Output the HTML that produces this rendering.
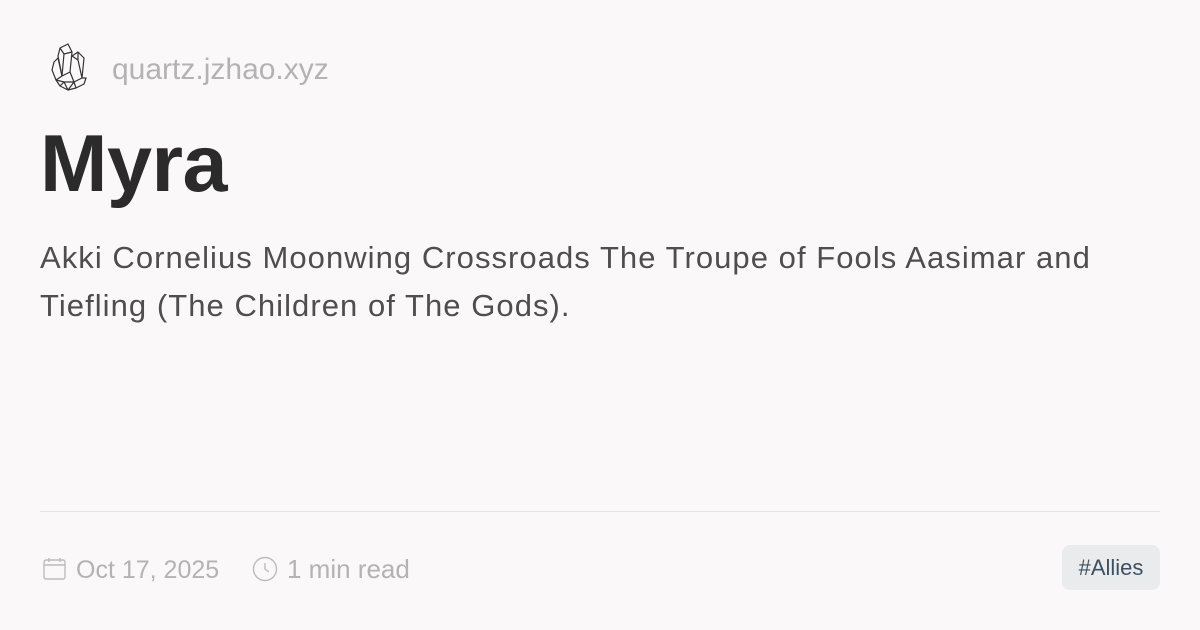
<!DOCTYPE html>
<html><head><meta charset="utf-8"><style>
html,body{margin:0;padding:0}
body{width:1200px;height:630px;background:#faf8f8;position:relative;overflow:hidden;font-family:"Liberation Sans",sans-serif}
.site{position:absolute;left:112px;top:52px;font-size:30px;color:#b4b2b2;line-height:36px}
.title{position:absolute;left:40px;top:118px;font-size:81px;font-weight:bold;color:#2b2b2b;line-height:92px;letter-spacing:-0.5px}
.desc{position:absolute;left:40px;top:234px;font-size:31px;color:#4e4e4e;line-height:48px;white-space:nowrap;letter-spacing:1.05px}
.hr{position:absolute;left:40px;right:40px;top:511px;height:1px;background:#e6e4e4}
.meta{position:absolute;top:553px;font-size:26px;color:#b4b2b2;line-height:32px}
.tag{position:absolute;left:1062px;top:545px;width:98px;height:45px;background:#eaebed;border-radius:8px;color:#3f5060;font-size:22px;line-height:45px;text-align:center}
</style></head><body>
<svg style="position:absolute;left:48px;top:42px" width="40" height="52" viewBox="0 0 40 52" fill="none" stroke="#333" stroke-width="1.2" stroke-linejoin="round">
<path d="M12 6 L20 2 L24 10 L22 30 L14 34 L10 14 Z"/>
<path d="M12 6 L16 12 L14 34 M16 12 L24 10"/>
<path d="M24 14 L30 10 L36 16 L34 36 L26 40 L22 30"/>
<path d="M30 10 L30 18 L34 36 M24 14 L30 18"/>
<path d="M6 20 L10 16 L14 34 L8 38 L4 28 Z"/>
<path d="M8 38 L12 44 L20 48 L28 46 L36 42 L38 36 L34 36 M8 38 L16 40 L26 40 M12 44 L16 40 L20 48 L26 40 L28 46"/>
</svg>
<div class="site">quartz.jzhao.xyz</div>
<div class="title">Myra</div>
<div class="desc">Akki Cornelius Moonwing Crossroads The Troupe of Fools Aasimar and<br>Tiefling (The Children of The Gods).</div>
<div class="hr"></div>
<svg style="position:absolute;left:43px;top:557px" width="24" height="24" viewBox="0 0 24 24" fill="none" stroke="#bdbbbb" stroke-width="1.4"><rect x="1" y="3" width="21" height="19" rx="2"/><path d="M1 8 H22 M6 1 V5 M17 1 V5"/></svg>
<div class="meta" style="left:76px;font-size:25px;top:554px">Oct 17, 2025</div>
<svg style="position:absolute;left:252px;top:556px" width="26" height="26" viewBox="0 0 26 26" fill="none" stroke="#bdbbbb" stroke-width="1.4"><circle cx="13" cy="13" r="11.5"/><path d="M13 7 V13 L17 16"/></svg>
<div class="meta" style="left:287px">1 min read</div>
<div class="tag">#Allies</div>
</body></html>
